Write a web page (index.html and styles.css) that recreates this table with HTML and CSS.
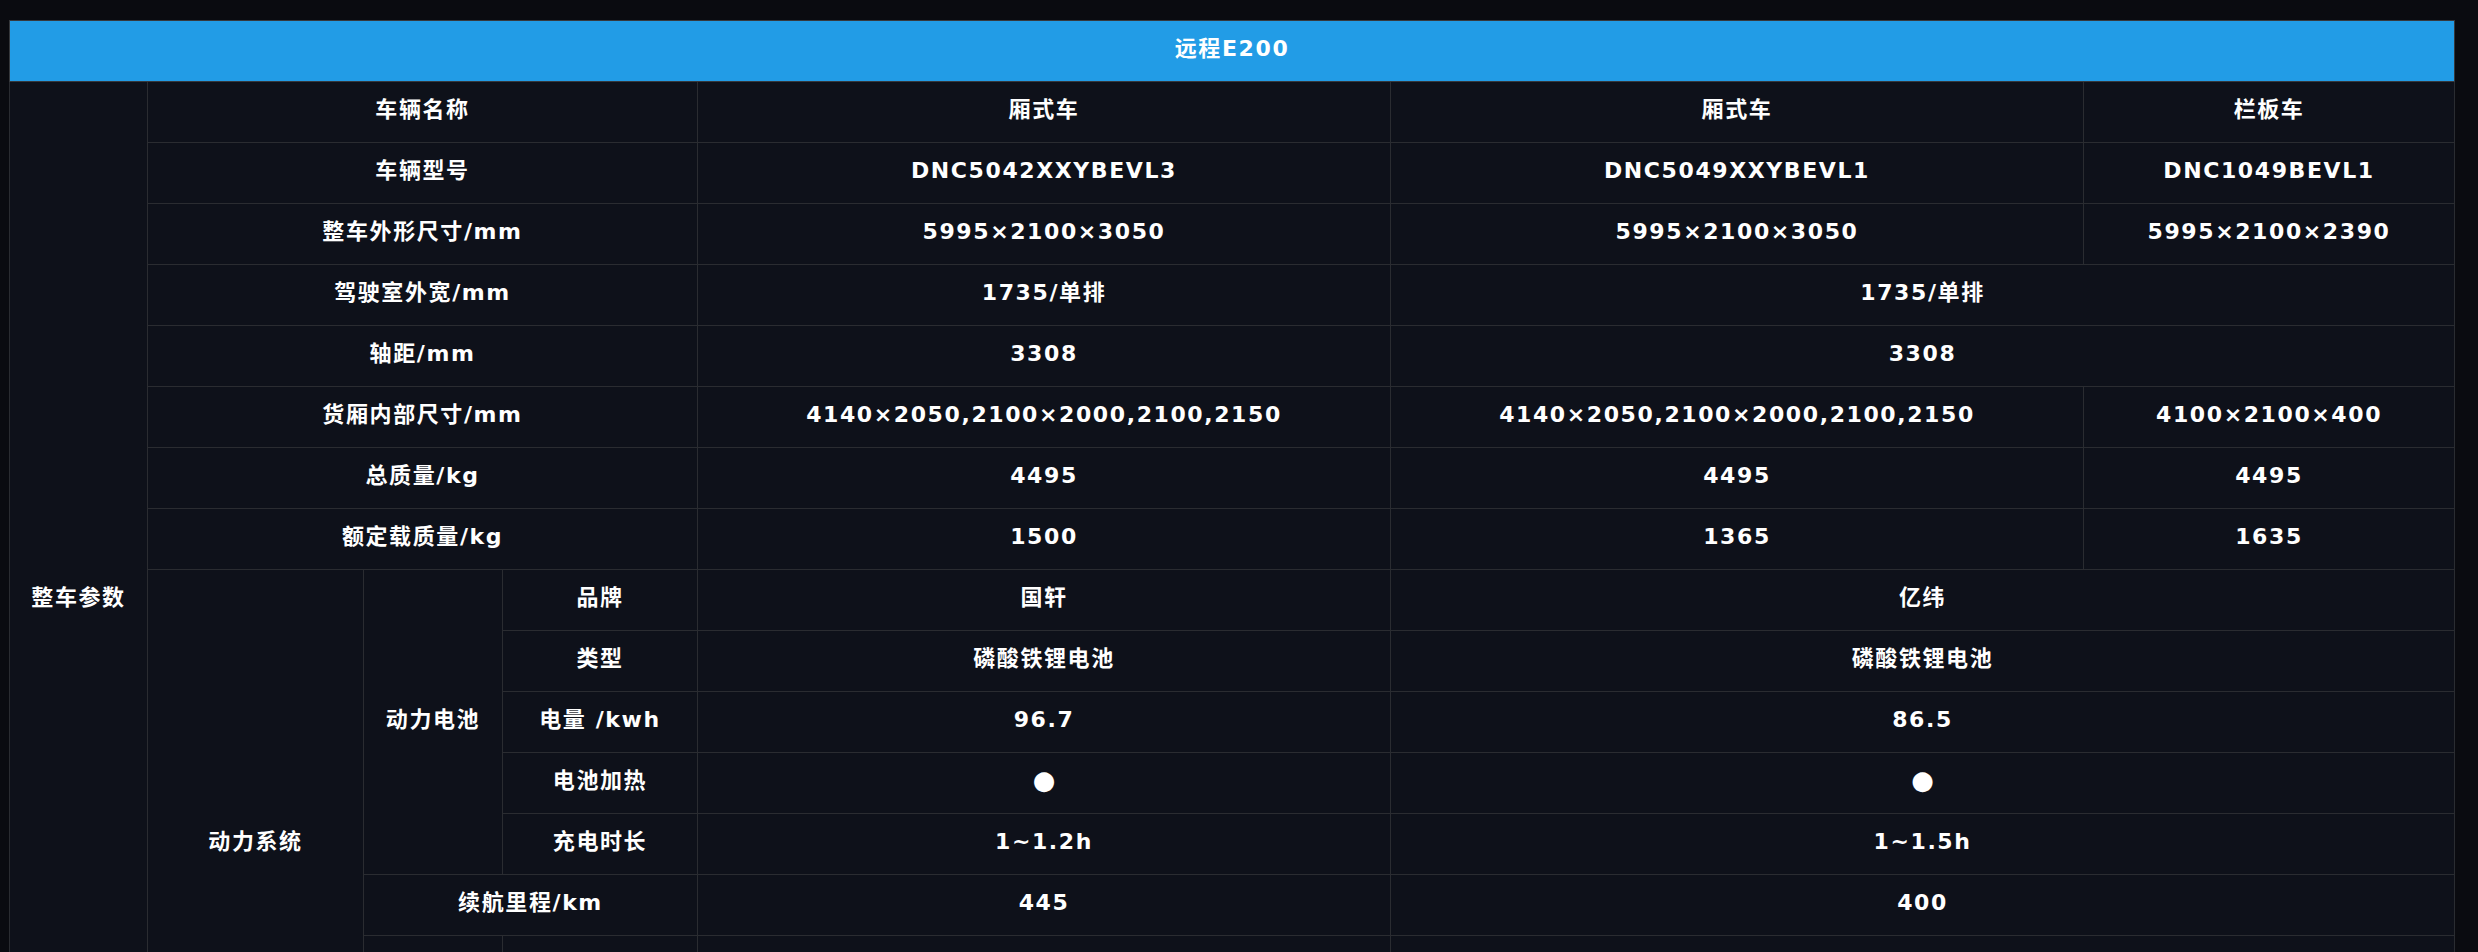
FILE: index.html
```html
<!DOCTYPE html>
<html lang="zh-CN">
<head>
<meta charset="utf-8">
<title>远程E200 参数</title>
<link rel="stylesheet" href="styles.css">
</head>
<body>
<div class="page">
  <table class="spec">
    <colgroup>
      <col class="c-a"><col class="c-b"><col class="c-c"><col class="c-d"><col class="c-e"><col class="c-f"><col class="c-g">
    </colgroup>
    <thead>
      <tr><th class="title" colspan="7">远程E200</th></tr>
    </thead>
    <tbody>
      <tr>
        <td rowspan="17">整车参数</td>
        <td colspan="3">车辆名称</td>
        <td>厢式车</td><td>厢式车</td><td>栏板车</td>
      </tr>
      <tr><td colspan="3">车辆型号</td><td>DNC5042XXYBEVL3</td><td>DNC5049XXYBEVL1</td><td>DNC1049BEVL1</td></tr>
      <tr><td colspan="3">整车外形尺寸/mm</td><td>5995×2100×3050</td><td>5995×2100×3050</td><td>5995×2100×2390</td></tr>
      <tr><td colspan="3">驾驶室外宽/mm</td><td>1735/单排</td><td colspan="2">1735/单排</td></tr>
      <tr><td colspan="3">轴距/mm</td><td>3308</td><td colspan="2">3308</td></tr>
      <tr><td colspan="3">货厢内部尺寸/mm</td><td>4140×2050,2100×2000,2100,2150</td><td>4140×2050,2100×2000,2100,2150</td><td>4100×2100×400</td></tr>
      <tr><td colspan="3">总质量/kg</td><td>4495</td><td>4495</td><td>4495</td></tr>
      <tr><td colspan="3">额定载质量/kg</td><td>1500</td><td>1365</td><td>1635</td></tr>
      <tr>
        <td rowspan="9">动力系统</td>
        <td rowspan="5">动力电池</td>
        <td>品牌</td><td>国轩</td><td colspan="2">亿纬</td>
      </tr>
      <tr><td>类型</td><td>磷酸铁锂电池</td><td colspan="2">磷酸铁锂电池</td></tr>
      <tr><td>电量 /kwh</td><td>96.7</td><td colspan="2">86.5</td></tr>
      <tr><td>电池加热</td><td><span class="dot">●</span></td><td colspan="2"><span class="dot">●</span></td></tr>
      <tr><td>充电时长</td><td>1~1.2h</td><td colspan="2">1~1.5h</td></tr>
      <tr><td colspan="2">续航里程/km</td><td>445</td><td colspan="2">400</td></tr>
      <tr>
        <td rowspan="3"></td>
        <td></td><td></td><td colspan="2"></td>
      </tr>
      <tr><td></td><td></td><td colspan="2"></td></tr>
      <tr><td></td><td></td><td colspan="2"></td></tr>
    </tbody>
  </table>
</div>
</body>
</html>
```

FILE: styles.css
```css
html, body {
  margin: 0;
  background: #0a0b10;
}

body {
  font-family: "DejaVu Sans", "Noto Sans CJK SC", sans-serif;
  color: #ffffff;
}

.page {
  padding: 20px 23px 0 9px;
}

.spec {
  width: 2446px;
  border-collapse: collapse;
  table-layout: fixed;
  background: #0e111a;
}

.c-a { width: 138px; }
.c-b { width: 216px; }
.c-c { width: 139px; }
.c-d { width: 195px; }
.c-e { width: 693px; }
.c-f { width: 693px; }
.c-g { width: 371px; }

.spec th,
.spec td {
  border: 1px solid #2a2c31;
  height: 56px;
  padding: 0 0 4px;
  text-align: center;
  vertical-align: middle;
  font-size: 22px;
  font-weight: 600;
  letter-spacing: 1.6px;
  line-height: 1.2;
  white-space: nowrap;
}

.spec .title {
  background: #229ce6;
  border-color: #36383c;
}

.dot {
  font-size: 26px;
  letter-spacing: 0;
}
```
